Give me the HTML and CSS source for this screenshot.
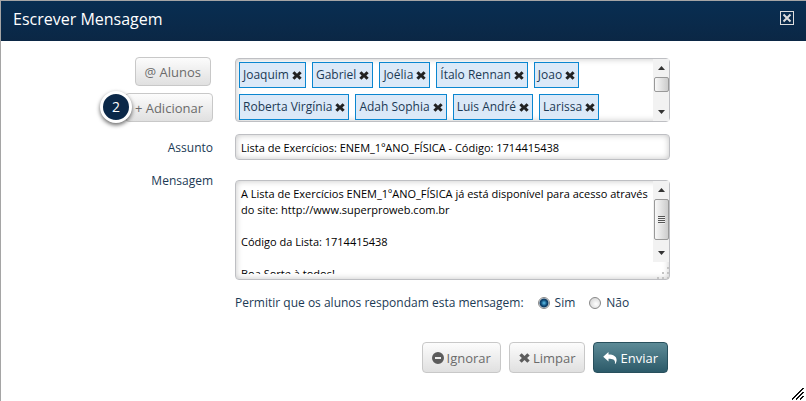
FILE: index.html
```html
<!DOCTYPE html>
<html lang="pt-BR">
<head>
<meta charset="utf-8">
<title>Escrever Mensagem</title>
<link rel="stylesheet" href="styles.css">
</head>
<body>
<svg class="defs" aria-hidden="true">
  <symbol id="times" viewBox="0 0 11 10"><path d="M2.7.3 5.5 3 8.3.3 10.7 2.6 8.1 5 10.7 7.4 8.3 9.7 5.5 7 2.7 9.7.3 7.4 2.9 5 .3 2.6Z"/></symbol>
  <symbol id="up" viewBox="0 0 7 4"><path d="M3.5 0 7 4H0Z"/></symbol>
  <symbol id="down" viewBox="0 0 7 4"><path d="M0 0H7L3.5 4Z"/></symbol>
</svg>
<div class="dialog" role="dialog" aria-labelledby="title">
  <header class="header">
    <h1 class="title" id="title">Escrever Mensagem</h1>
    <button class="close" type="button" aria-label="Fechar"><svg viewBox="0 0 12 12"><path d="M2.500 2.500l7 7M9.500 2.500l-7 7"/></svg></button>
  </header>
  <form class="form">
    <div class="row">
      <div class="side actions">
        <button class="btn btn-small students" type="button">@ Alunos</button>
        <div class="add"><button class="btn btn-small" type="button">+ Adicionar</button><span class="step">2</span></div>
      </div>
      <div class="box recipients">
        <ul class="tags">
          <li class="tag">Joaquim<button type="button" aria-label="Remover Joaquim"><svg><use href="#times"/></svg></button></li>
          <li class="tag">Gabriel<button type="button" aria-label="Remover Gabriel"><svg><use href="#times"/></svg></button></li>
          <li class="tag">Joélia<button type="button" aria-label="Remover Joélia"><svg><use href="#times"/></svg></button></li>
          <li class="tag">Ítalo Rennan<button type="button" aria-label="Remover Ítalo Rennan"><svg><use href="#times"/></svg></button></li>
          <li class="tag">Joao<button type="button" aria-label="Remover Joao"><svg><use href="#times"/></svg></button></li>
          <li class="tag">Roberta Virgínia<button type="button" aria-label="Remover Roberta Virgínia"><svg><use href="#times"/></svg></button></li>
          <li class="tag">Adah Sophia<button type="button" aria-label="Remover Adah Sophia"><svg><use href="#times"/></svg></button></li>
          <li class="tag">Luis André<button type="button" aria-label="Remover Luis André"><svg><use href="#times"/></svg></button></li>
          <li class="tag">Larissa<button type="button" aria-label="Remover Larissa"><svg><use href="#times"/></svg></button></li>
        </ul>
        <div class="scroll" aria-hidden="true">
          <svg class="arrow"><use href="#up"/></svg>
          <div class="track"><div class="thumb"></div></div>
          <svg class="arrow"><use href="#down"/></svg>
        </div>
      </div>
    </div>
    <div class="row">
      <label class="side" for="subject">Assunto</label>
      <input class="box subject" id="subject" type="text" value="Lista de Exercícios: ENEM_1ºANO_FÍSICA - Código: 1714415438">
    </div>
    <div class="row message-row">
      <label class="side" for="message">Mensagem</label>
      <div class="box message">
        <textarea id="message">A Lista de Exercícios ENEM_1ºANO_FÍSICA já está disponível para acesso através do site: http://www.superproweb.com.br

Código da Lista: 1714415438

Boa Sorte à todos!</textarea>
        <div class="scroll-side" aria-hidden="true">
          <div class="scroll">
            <svg class="arrow"><use href="#up"/></svg>
            <div class="track"><div class="thumb thumb-long"><i></i></div></div>
            <svg class="arrow"><use href="#down"/></svg>
          </div>
          <svg class="dots" viewBox="0 0 12 12"><path d="M10 0h2v2h-2zM5 5h2v2H5zM10 5h2v2h-2zM0 10h2v2H0zM5 10h2v2H5zM10 10h2v2h-2z"/></svg>
        </div>
      </div>
    </div>
    <div class="row">
      <div class="side"></div>
      <div class="reply" role="radiogroup" aria-labelledby="reply">
        <span class="question" id="reply">Permitir que os alunos respondam esta mensagem:</span>
        <label class="option"><input type="radio" name="reply" checked>Sim</label>
        <label class="option"><input type="radio" name="reply">Não</label>
      </div>
    </div>
    <footer class="footer">
      <button class="btn" type="button"><svg viewBox="0 0 12 12"><path fill-rule="evenodd" d="M6 0a6 6 0 1 1 0 12A6 6 0 0 1 6 0ZM3 5v2h6V5Z"/></svg>Ignorar</button>
      <button class="btn" type="reset"><svg class="clear-icon"><use href="#times"/></svg>Limpar</button>
      <button class="btn btn-send" type="submit"><svg class="send-icon" viewBox="0 0 14 12"><path d="M5.5 0v2.6C10.500 2.600 13.600 4.500 13.600 8c0 1.500-.6 2.900-1.300 3.900-.3.2-.5 0-.4-.4.700-3.400-1.700-4.700-6.400-4.700v2.700L.2 4.700Z"/></svg>Enviar</button>
    </footer>
  </form>
  <svg class="grip" viewBox="0 0 12 12" aria-hidden="true"><path d="M0 11.500 11.500 0M4 11.500 11.500 4M8 11.500 11.500 8"/></svg>
</div>
</body>
</html>
```

FILE: styles.css
```css
* { box-sizing: border-box; }
body {
  margin: 0;
  background: #fff;
  color: #1b3a55;
  font: 12px/16px "Open Sans", sans-serif;
}
button, input, textarea { font: inherit; }
.defs { display: block; width: 0; height: 0; }
.dialog {
  position: relative;
  min-height: 100vh;
  border: solid #a5a5a5;
  border-width: 1px 0 0 1px;
}
.header {
  display: flex;
  align-items: flex-start;
  justify-content: space-between;
  height: 40px;
  padding: 6px 12px;
  background: linear-gradient(#082e52, #0b2745);
}
.title {
  margin: 0;
  color: #fff;
  font-size: 16px;
  font-weight: 400;
  line-height: 24px;
}
.close {
  width: 14px;
  height: 14px;
  margin-top: 4px;
  padding: 0;
  border: 1px solid #ddd;
  background: none;
}
.close svg { display: block; width: 12px; height: 12px; fill: none; stroke: #ddd; stroke-width: 2; }
.form {
  display: flex;
  flex-direction: column;
  gap: 12px;
  padding: 16px 136px 0 0;
}
.row { display: flex; gap: 22px; }
.row > :last-child { flex: 1; min-width: 0; }
.side { flex: 0 0 212px; padding-top: 6px; text-align: right; }
.actions {
  display: flex;
  flex-direction: column;
  align-items: flex-end;
  gap: 7px;
  padding: 0;
}
.students { margin-right: 2px; }
.add { position: relative; display: flex; }
.step {
  position: absolute;
  top: 0;
  left: -25px;
  width: 32px;
  height: 32px;
  margin-top: -2px;
  border: 3px solid #fff;
  border-radius: 50%;
  background: #0b2848;
  box-shadow: 0 2px 4px rgba(0, 0, 0, .6);
  color: #fff;
  font-size: 14px;
  line-height: 26px;
  text-align: center;
}
.btn {
  display: flex;
  align-items: center;
  gap: 3px;
  height: 31px;
  padding: 0 9px;
  border: 1px solid #c8c8c8;
  border-radius: 4px;
  background: linear-gradient(#fcfcfc, #e0e0e0);
  color: #6b6b6b;
  font-size: 13px;
}
.btn-small { height: 29px; }
.btn svg { width: 12px; height: 12px; fill: #5c5c5c; }
.btn .clear-icon { width: 11px; height: 10px; }
.btn-send {
  border-color: #28505d;
  background: linear-gradient(#5d8b97, #2c5a69);
  color: #fff;
}
.btn .send-icon { width: 14px; fill: #fff; }
.box {
  border: 1px solid #bebfc3;
  border-radius: 4px;
  background: #fff;
  box-shadow: inset 0 0 6px rgba(0, 0, 0, .24);
}
.recipients { display: flex; height: 64px; margin-top: 1px; }
.tags {
  display: flex;
  flex: 1;
  flex-wrap: wrap;
  align-content: flex-start;
  gap: 6px;
  margin: 0;
  padding: 3px;
  list-style: none;
}
.tag {
  display: flex;
  align-items: center;
  gap: 3px;
  height: 26px;
  padding: 0 3px;
  border: 1px solid #0a86d0;
  background: #dbe9f8;
}
.tag button { display: flex; padding: 0; border: 0; background: none; }
.tag svg { width: 10px; height: 9px; fill: #222; }
.scroll {
  display: flex;
  flex: 0 0 16px;
  flex-direction: column;
  align-items: center;
  background: #f2f2f2;
}
.arrow { flex: none; width: 7px; height: 4px; margin: 7px 0; fill: #333; }
.track { flex: 1; width: 15px; }
.thumb {
  display: flex;
  align-items: center;
  justify-content: center;
  height: 15px;
  border: 1px solid #999;
  border-radius: 2px;
  background: linear-gradient(90deg, #f8f8f8, #ccc);
}
.thumb-long { height: 41px; }
.thumb i {
  width: 7px;
  height: 8px;
  background: repeating-linear-gradient(#555 0 1px, #eee 1px 2px);
}
.subject { height: 26px; padding: 0 5px; color: #000; font-size: 11px; }
.message-row { margin-top: 8px; }
.message-row .side { padding: 0; margin-top: -7px; }
.message { display: flex; height: 100px; }
.message textarea {
  flex: 1;
  min-width: 0;
  margin: 5px 0;
  padding: 0 0 0 5px;
  border: 0;
  outline: 0;
  background: none;
  overflow: hidden;
  resize: none;
  color: #000;
  font-size: 11px;
}
.scroll-side { display: flex; flex-direction: column; justify-content: space-between; width: 16px; }
.scroll-side .scroll { flex: 0 0 81px; }
.dots { align-self: flex-end; width: 12px; height: 12px; fill: #c4c4c4; }
.reply { display: flex; align-items: center; gap: 14px; padding-top: 3px; }
.option { display: flex; align-items: center; gap: 5px; }
.option input {
  appearance: none;
  width: 12px;
  height: 12px;
  margin: 0;
  border: 1px solid #888;
  border-radius: 50%;
  background: radial-gradient(circle at 60% 60%, #fff, #ccc);
}
.option input:checked {
  background: radial-gradient(circle, #5fc4ee 0, #0e4a78 3px, #0e3a60 4px, #e8eef2 5px);
}
.footer {
  display: flex;
  justify-content: flex-end;
  gap: 8px;
  margin: 19px 2px 0 0;
}
.grip {
  position: absolute;
  right: 2px;
  bottom: 1px;
  width: 12px;
  height: 12px;
  fill: none;
  stroke: #111;
  shape-rendering: crispEdges;
}
```
